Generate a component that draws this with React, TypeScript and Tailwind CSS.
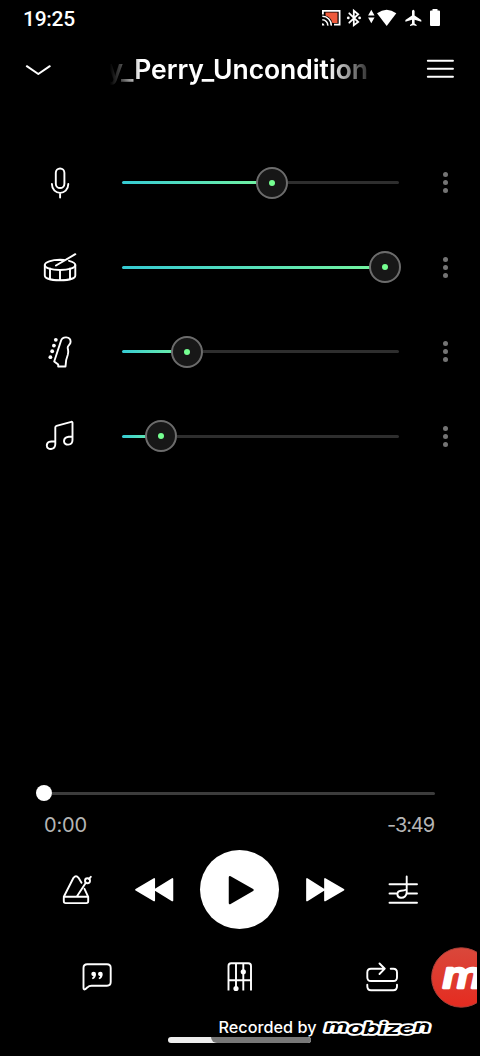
import type { ReactNode } from "react";

type IconProps = { box: string; className: string; children: ReactNode; label?: string };

function Icon({ box, className, children, label }: IconProps) {
  return (
    <svg
      viewBox={box}
      className={`shrink-0 ${className}`}
      fill="none"
      stroke="#fff"
      strokeWidth="1.9"
      strokeLinecap="round"
      strokeLinejoin="round"
      aria-label={label}
    >
      {children}
    </svg>
  );
}

function StatusBar() {
  return (
    <div className="flex h-9 items-center pl-[23px] font-['Roboto',sans-serif] text-[21px] font-medium tracking-[-0.3px]">
      <span className="w-[297px] pt-0.5 leading-9">19:25</span>
      <Icon box="320 0 124 36" className="h-9 w-[124px]">
        <g stroke="none" fill="#fff">
          <path d="M325.500 12.500H337.500V23H332.500Q331.500 17.500 325.500 15.500Z" fill="#ee5a3c" />
          <path d="M322 10H340.500V25.500H334V23.800H338.700V11.800H323.800V14.500H322Z" />
          <path d="M322 23.200A2.400 2.400 0 0 1 324.400 25.600H322Z" />
        </g>
        <path d="M322.300 19.800A5.500 5.500 0 0 1 327.800 25.600M322.300 16.300A9 9 0 0 1 331.300 25.600" strokeWidth="1.600" strokeLinecap="butt" />
        <path d="M349.300 13.300L358.200 22L353.800 25.300V10.700L358.200 14.200L349.300 22.700" strokeWidth="1.800" strokeLinejoin="miter" />
        <g stroke="none" fill="#fff">
          <circle cx="348.300" cy="17.900" r="1.400" />
          <circle cx="359.600" cy="17.900" r="1.400" />
          <path d="M371.300 9.800L374.500 15.500H368.100ZM371.300 23.200L374.500 17.500H368.100Z" />
          <path d="M377 13.300Q386.700 6.300 396.300 13.300L386.700 26Z" />
          <path d="M412 11Q413.300 8.500 414.600 11V15.500L421.300 20V21.700L414.600 19.700V23.500L416.600 25V26L413.300 25.200L410 26V25L412 23.500V19.700L405.400 21.700V20L412 15.500Z" />
          <path d="M432.500 10.500V9H437.500V10.500H439Q440 10.500 440 11.500V25Q440 26 439 26H431Q430 26 430 25V11.500Q430 10.500 431 10.500Z" />
        </g>
      </Icon>
    </div>
  );
}

function Header() {
  return (
    <header className="flex h-[68px] items-center">
      <button className="ml-5 flex w-9 justify-center" aria-label="Collapse">
        <Icon box="20 60 36 20" className="h-5 w-9">
          <path d="M26.800 66.200L38.300 74L49.800 66.200" strokeWidth="2" />
        </Icon>
      </button>
      <div className="ml-[51px] flex h-10 w-[263px] items-center justify-end overflow-hidden whitespace-nowrap pr-[2px] font-['Inter',sans-serif] text-[26.500px] font-semibold tracking-[-0.060px] [mask-image:linear-gradient(to_right,transparent_1%,rgb(0_0_0/0.25)_5%,black_13%,black_84%,rgb(0_0_0/0.2)_99%)]">
        y_Perry_Uncondition
      </div>
      <button className="ml-[56px]" aria-label="Menu">
        <Icon box="426 56 28 28" className="h-7 w-7">
          <path d="M427.800 60.700H453M427.800 68.700H453M427.800 76.700H453" strokeWidth="1.900" />
        </Icon>
      </button>
    </header>
  );
}

const mic = (
  <Icon box="40 162.500 40 40" className="size-10" label="Vocals">
    <rect x="55.800" y="168" width="8.600" height="19.500" rx="4.300" />
    <path d="M51.900 183.500C52 195.300 68.200 195.300 68.300 183.500M60.100 192.500V197" />
  </Icon>
);

const drum = (
  <Icon box="40 247 40 40" className="size-10" label="Drums">
    <path d="M69 260.800C73 261.800 75.300 263 75.300 265C75.300 268 68.500 270 60 270S44.800 268 44.800 265S51.500 259.800 60 259.800L64 260" />
    <path d="M44.800 265V275.500C44.800 278.500 51.500 280.300 60 280.300S75.300 278.500 75.300 275.500V265M50 268.500V279M60 270V280M70 268.500V279" />
    <path d="M56 265.500L75.300 254.200" strokeWidth="2" />
  </Icon>
);

const guitar = (
  <Icon box="40 331.750 40 40" className="size-10" label="Bass">
    <path d="M54.200 361.200L61 340.500C62.500 335.800 70.500 336 70.600 341.500C70.700 344.500 67.500 345 67.700 347.300C67.900 350 69 351.500 67.800 354.500C66.300 358 65.500 361 65.500 366.300H58.200V364.300Z" />
    <g stroke="none" fill="#fff">
      <circle cx="55.800" cy="339.600" r="1.900" />
      <circle cx="53.900" cy="345.300" r="1.900" />
      <circle cx="52.200" cy="351" r="1.900" />
      <circle cx="50.400" cy="356.900" r="1.900" />
    </g>
  </Icon>
);

const notes = (
  <Icon box="40 416 40 40" className="size-10" label="Other">
    <path d="M55.300 441.300V427.500Q55.300 426.200 56.500 425.800L71.300 421.800Q72.500 421.600 72.500 422.800V440M55.300 441.300V444C55.300 450.300 46.800 450.500 46.800 445.500C46.800 441.500 50 441.200 55.300 441.200M72.500 436.500V440C72.500 446 64 446 64 441.200C64 437 67.500 436.600 72.500 436.500" />
  </Icon>
);

const tracks = [
  { name: "vocals", icon: mic, level: 150 },
  { name: "drums", icon: drum, level: 263 },
  { name: "bass", icon: guitar, level: 65 },
  { name: "other", icon: notes, level: 39 },
];

function Mixer() {
  return (
    <section className="mt-[36px] flex flex-col">
      {tracks.map((t) => (
        <div key={t.name} className="flex h-[84.500px] items-center pl-10 pt-[1px]">
          {t.icon}
          <div className="ml-[42px] flex h-8 w-[277px] items-center">
            <div
              className="-mr-4 h-[3px] shrink-0 rounded-l-full bg-linear-to-r from-[#35cbd3] to-[#75f59b]"
              style={{ width: t.level }}
            />
            <div className="z-10 flex size-8 shrink-0 items-center justify-center rounded-full border-2 border-[#6c6c6c] bg-[#171717]">
              <div className="size-[6px] rounded-full bg-[#75ff91]" />
            </div>
            <div className="h-[3px] flex-1 rounded-r-full bg-[#2e2e2e]" />
          </div>
          <div className="ml-[44px] flex flex-col gap-[3px]">
            <span className="size-[5px] rounded-full bg-[#747474]" />
            <span className="size-[5px] rounded-full bg-[#747474]" />
            <span className="size-[5px] rounded-full bg-[#747474]" />
          </div>
        </div>
      ))}
    </section>
  );
}

function Progress() {
  return (
    <section className="px-9">
      <div className="flex h-4 items-center">
        <div className="size-4 rounded-full bg-white" />
        <div className="mt-px h-[3px] w-[383px] rounded-r-full bg-[#3c3c3c]" />
      </div>
      <div className="mt-[9px] flex h-[30px] items-center justify-between pl-2 pr-[10px] font-['Inter',sans-serif] text-[20px] text-[#b5b5b5]">
        <span className="tracking-[-0.200px]">0:00</span>
        <span className="tracking-[-1.100px]">-3:49</span>
      </div>
    </section>
  );
}

function Transport() {
  return (
    <div className="mt-[9.500px] flex h-20 items-center pl-[57px]">
      <Icon box="57 869.700 40 40" className="size-10" label="Metronome">
        <path d="M63.800 896.500L73.500 877.500Q76 874.500 78.500 877.500L81.500 882.500M84.500 888.500L88.200 896.500V901Q88.200 902.800 86.300 902.800H65.700Q63.800 902.800 63.800 901V896.500H88.200M77 896L86 882.300M89 878.500L90.800 876.500" />
        <circle cx="87.500" cy="880.400" r="2.500" />
      </Icon>
      <Icon box="133 870 44 40" className="ml-9 h-10 w-11" label="Rewind">
        <path d="M136 889.700L154.200 879V900.500ZM155 889.700L172.400 879V900.500Z" fill="#fff" strokeWidth="1.700" />
      </Icon>
      <button className="ml-[22.500px] flex size-[79px] items-center justify-center rounded-full bg-white" aria-label="Play">
        <Icon box="219 869.700 40 40" className="size-10">
          <path d="M230 877L252.500 889.700L230 902.700Z" fill="#000" stroke="#000" strokeWidth="2.500" />
        </Icon>
      </button>
      <Icon box="303 870 44 40" className="ml-[24.500px] h-10 w-11" label="Fast forward">
        <path d="M307 879V900.500L324 889.700ZM325 879V900.500L343.500 889.700Z" fill="#fff" strokeWidth="1.700" />
      </Icon>
      <Icon box="383 870 40 40" className="ml-9 size-10" label="Chords">
        <path d="M389.500 884.300H417M389.500 893.500H397M407 893.500H417M389.500 902.700H417M406.700 876.500V892C406.700 896 404 898 400.800 897.800C396.500 897.500 396 891.300 401 890.800Q404 890.700 406.700 889.500" />
      </Icon>
    </div>
  );
}

function Tools() {
  return (
    <div className="mt-[17px] flex h-[62px] items-center pl-[77px]">
      <Icon box="77 958 40 40" className="size-10" label="Lyrics">
        <path d="M83.500 968Q83.500 964.300 87.200 964.300H107Q110.700 964.300 110.700 968V982Q110.700 985.700 107 985.700H91.500Q89 985.700 87.500 987.300L85.300 989.200Q83.500 990 83.500 988Z" />
        <g stroke="none" fill="#fff">
          <path d="M91.300 974A2.300 2.300 0 1 1 96 974Q96 978 92.700 979.300L91.800 978Q93.500 977 93.500 976.200Q91.300 976 91.300 974ZM98 974A2.300 2.300 0 1 1 102.700 974Q102.700 978 99.400 979.300L98.500 978Q100.200 977 100.200 976.200Q98 976 98 974Z" />
        </g>
      </Icon>
      <Icon box="219 958 40 40" className="ml-[102px] size-10" label="Mixer">
        <path d="M228.500 990.500V966Q228.500 963.300 231.200 963.300H248.300Q251 963.300 251 966V990.500M236 963.500V990M243.300 963.500V990.500M228.500 980.200H251" strokeLinecap="butt" />
        <g fill="#fff" stroke="none">
          <circle cx="236" cy="988.500" r="2.600" />
          <circle cx="243.300" cy="971.800" r="2.600" />
        </g>
      </Icon>
      <Icon box="362 958 40 40" className="ml-[103px] size-10" label="Loop">
        <path d="M384.500 968.700H371Q367.300 968.700 367.300 972.500V977.200Q367.300 981 371 981H393.300Q397 981 397 977.200V972.500Q397 968.700 393.300 968.700H390.700M379.500 963.500L384.800 968.700L379.500 974M367.300 984.700V986.300Q367.300 990.300 371 990.300H393.300Q397 990.300 397 986.300V984.700" />
      </Icon>
      <svg viewBox="430 947 47 62" className="ml-7 h-[62px] w-[47px] shrink-0 overflow-hidden" aria-label="Mobizen">
        <defs>
          <linearGradient id="badge" x1="0" y1="0" x2="0" y2="1">
            <stop offset="0" stopColor="#d9483b" />
            <stop offset="1" stopColor="#e52b20" />
          </linearGradient>
        </defs>
        <circle cx="461.300" cy="977.500" r="29.700" fill="url(#badge)" stroke="#a93f38" />
        <text x="442.500" y="987.500" textLength="40" lengthAdjust="spacingAndGlyphs" fill="#fff" stroke="#fff" strokeWidth="2.600" strokeLinejoin="round" className="font-['Inter',sans-serif] text-[36px] font-medium italic">
          m
        </text>
      </svg>
    </div>
  );
}

function Footer() {
  return (
    <footer className="relative mt-[9.500px] h-[38px]">
      <div className="absolute left-[168px] top-[19px] flex h-[6px] w-[143px] overflow-hidden rounded-full bg-[#eee]">
        <div className="ml-[43px] flex-1 rounded-bl-full bg-[#777]" />
      </div>
      <svg viewBox="210 1012 230 32" className="absolute left-[210px] top-[-6px] h-8 w-[230px]">
        <text x="218.500" y="1033" textLength="98" lengthAdjust="spacingAndGlyphs" fill="#fff" className="font-['Inter',sans-serif] text-[15.500px] font-medium">
          Recorded by
        </text>
        <text x="325" y="1032" textLength="105" lengthAdjust="spacingAndGlyphs" fill="#000" stroke="#fff" strokeWidth="3.600" strokeLinejoin="round" paintOrder="stroke" className="font-['Inter',sans-serif] text-[16px] font-bold italic">
          m<tspan dy="1.500">obize</tspan><tspan dy="-1.500">n</tspan>
        </text>
      </svg>
    </footer>
  );
}

export default function App() {
  return (
    <main className="flex h-[1056px] w-[480px] flex-col overflow-hidden bg-black text-white">
      <StatusBar />
      <Header />
      <Mixer />
      <div className="flex-1" />
      <Progress />
      <Transport />
      <Tools />
      <Footer />
    </main>
  );
}
